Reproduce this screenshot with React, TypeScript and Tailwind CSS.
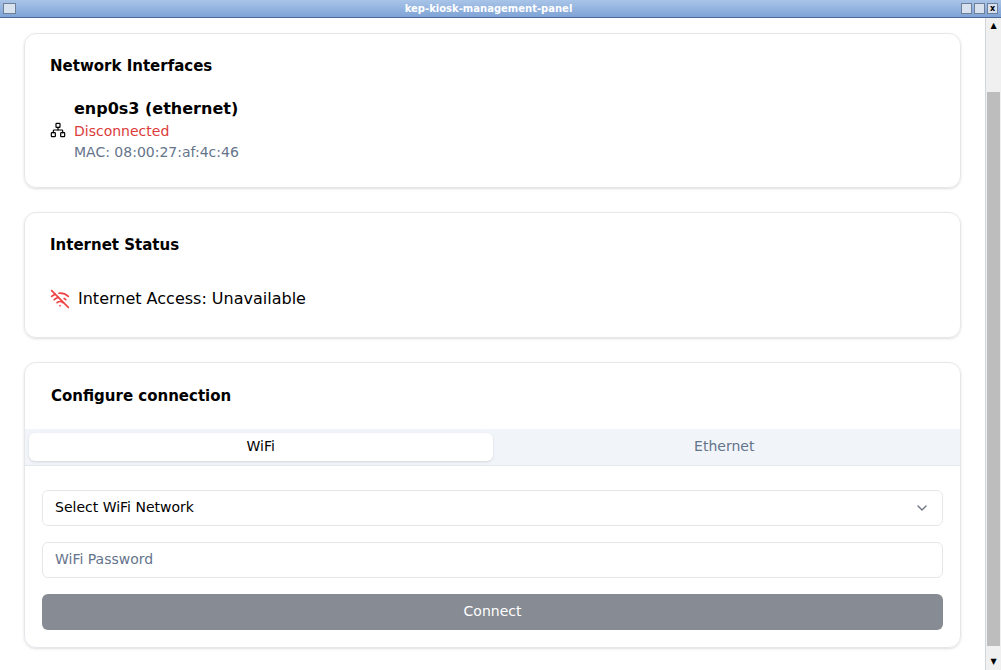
import React from 'react';
import { Network, WifiOff, ChevronDown } from 'lucide-react';

const font = { fontFamily: '"DejaVu Sans", sans-serif' };

export default function App() {
  return (
    <div className="w-[1001px] h-[670px] flex flex-col bg-white overflow-hidden" style={font}>
      <div className="h-[18px] flex items-center justify-between px-[3px] bg-gradient-to-b from-[#a9c4e8] to-[#7ea3d6] border-b border-[#4a6a98]">
        <div className="w-[13px] h-[11px] bg-[#d8e2ef] border border-[#6d7f99]" />
        <span className="text-[10px] font-bold text-white">kep-kiosk-management-panel</span>
        <div className="flex gap-[2px]">
          <div className="w-[11px] h-[11px] bg-[#d8e2ef] border border-[#6d7f99]" />
          <div className="w-[11px] h-[11px] bg-[#d8e2ef] border border-[#6d7f99]" />
          <div className="w-[11px] h-[11px] bg-[#d8e2ef] border border-[#6d7f99] text-[8px] leading-[9px] text-center font-bold">x</div>
        </div>
      </div>
      <div className="flex flex-1 min-h-0">
        <div className="flex-1 px-[24px] pt-[15px] flex flex-col gap-[24px]">
          <section className="rounded-xl border border-gray-200 shadow-sm px-[25px] pt-[21px] pb-[25px]">
            <h2 className="text-[15px] font-bold text-black">Network Interfaces</h2>
            <div className="flex items-center gap-[8px] mt-[20px]">
              <Network size={16} strokeWidth={1.8} className="text-black" />
              <div>
                <div className="text-[16px] font-bold leading-[22px] text-black">enp0s3 (ethernet)</div>
                <div className="text-[14px] leading-[22px] text-[#dc3b3b]">Disconnected</div>
                <div className="text-[14px] leading-[20px] text-[#64748b]">MAC: 08:00:27:af:4c:46</div>
              </div>
            </div>
          </section>
          <section className="rounded-xl border border-gray-200 shadow-sm px-[25px] pt-[21px] pb-[26px]">
            <h2 className="text-[15px] font-bold text-black">Internet Status</h2>
            <div className="flex items-center gap-[8px] mt-[31px]">
              <WifiOff size={20} className="text-[#ef4444]" />
              <span className="text-[16px] text-black">Internet Access: Unavailable</span>
            </div>
          </section>
          <section className="rounded-xl border border-gray-200 shadow-sm overflow-hidden">
            <h2 className="text-[15px] font-bold text-black px-[26px] pt-[22px] pb-[21px]">Configure connection</h2>
            <div className="bg-[#f1f5f9] p-[4px] flex border-b border-gray-200">
              <div className="flex-1 bg-white rounded-md shadow-sm h-[28px] flex items-center justify-center text-[14px] text-black">WiFi</div>
              <div className="flex-1 h-[28px] flex items-center justify-center text-[14px] text-[#64748b]">Ethernet</div>
            </div>
            <div className="px-[17px] pt-[24px] pb-[17px] flex flex-col gap-[16px]">
              <div className="h-[36px] border border-gray-200 rounded-md flex items-center justify-between px-[12px] text-[14px] text-black">
                Select WiFi Network
                <ChevronDown size={16} className="text-gray-500" />
              </div>
              <div className="h-[36px] border border-gray-200 rounded-md flex items-center px-[12px] text-[14px] text-[#64748b]">WiFi Password</div>
              <div className="h-[36px] bg-[#878b93] rounded-md flex items-center justify-center text-[14px] text-white">Connect</div>
            </div>
          </section>
        </div>
        <div className="w-[16px] bg-[#f0f0f0] flex flex-col border-l border-gray-300">
          <div className="h-[16px] text-[8px] text-center leading-[16px]">▲</div>
          <div className="flex-1 flex flex-col pt-[58px] pb-[8px]">
            <div className="flex-1 bg-[#bdbdbd] mx-[1px]" />
          </div>
          <div className="h-[16px] text-[8px] text-center leading-[16px]">▼</div>
        </div>
      </div>
    </div>
  );
}
